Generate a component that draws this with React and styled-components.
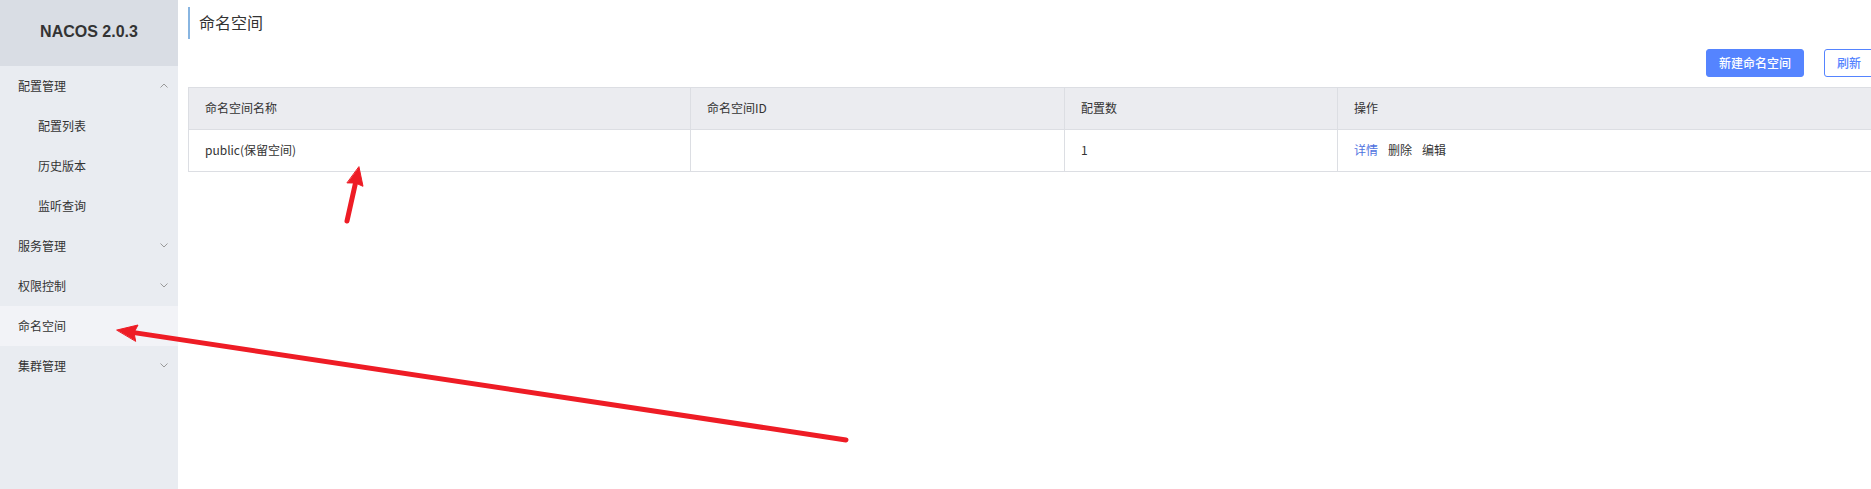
import React from 'react';
import styled, { createGlobalStyle } from 'styled-components';

const GlobalStyle = createGlobalStyle`
  *, *::before, *::after { box-sizing: border-box; }
  html, body { margin: 0; padding: 0; background: #fff; overflow: hidden; }
  body {
    font-family: "Noto Sans CJK SC", "Liberation Sans", sans-serif;
    font-size: 12px;
    color: #333;
  }
`;

const Page = styled.div`
  position: relative;
  display: flex;
  width: 1871px;
  height: 489px;
`;

const Sidebar = styled.aside`
  flex: 0 0 178px;
  width: 178px;
  height: 100%;
  background: #e9ecf1;
  display: flex;
  flex-direction: column;
`;

const Brand = styled.div`
  height: 66px;
  background: #d9dde4;
  display: flex;
  align-items: center;
  justify-content: center;
  padding-bottom: 3px;
  font-family: "Liberation Sans", Arial, sans-serif;
  font-weight: bold;
  font-size: 16px;
  color: #333;
`;

const MenuItem = styled.div`
  height: 40px;
  display: flex;
  align-items: center;
  justify-content: space-between;
  padding: 0 10px 2px ${p => (p.$sub ? 38 : 18)}px;
  background: ${p => (p.$active ? '#f2f3f7' : 'transparent')};
  color: #333;
  font-size: 12px;
`;

const Chevron = styled.svg`
  width: 8px;
  height: 5px;
  flex: 0 0 auto;
`;

const Main = styled.main`
  flex: 0 0 auto;
  width: 1696px;
  padding: 7px 0 0 10px;
  display: flex;
  flex-direction: column;
`;

const Title = styled.h1`
  margin: 0;
  height: 32px;
  border-left: 2px solid #88b5e1;
  padding-left: 9px;
  font-size: 16px;
  font-weight: normal;
  line-height: 30px;
  color: #333;
`;

const Toolbar = styled.div`
  margin-top: 10px;
  display: flex;
  justify-content: flex-end;
  gap: 20px;
`;

const Button = styled.button`
  height: 28px;
  padding: 0 12px;
  border-radius: 3px;
  border: 1px solid #5584ff;
  background: ${p => (p.$primary ? '#5584ff' : '#fff')};
  color: ${p => (p.$primary ? '#fff' : '#5584ff')};
  font-family: "Noto Sans CJK SC", sans-serif;
  font-size: 12px;
  font-weight: 500;
  line-height: 24px;
  cursor: pointer;
`;

const Table = styled.table`
  margin-top: 10px;
  width: 100%;
  border-collapse: collapse;
  table-layout: fixed;
  border: 1px solid #dcdee3;
`;

const HeadCell = styled.th`
  height: 42px;
  padding: 0 16px 2px;
  background: #ebecf0;
  border: 1px solid #dcdee3;
  text-align: left;
  font-weight: normal;
  font-size: 12px;
  color: #333;
`;

const Cell = styled.td`
  height: 42px;
  padding: 0 16px 2px;
  border: 1px solid #dcdee3;
  font-size: 12px;
  color: #333;
`;

const Action = styled.a`
  margin-right: 10px;
  color: ${p => (p.$link ? '#4f72e0' : '#333')};
  text-decoration: none;
  cursor: pointer;
`;

const Overlay = styled.svg`
  position: absolute;
  left: 0;
  top: 0;
  width: 1871px;
  height: 489px;
  pointer-events: none;
`;

const Down = () => (
  <Chevron viewBox="0 0 8 5">
    <polyline points="0.5,0.5 4,4 7.5,0.5" fill="none" stroke="#999" strokeWidth="1" />
  </Chevron>
);
const Up = () => (
  <Chevron viewBox="0 0 8 5">
    <polyline points="0.5,4.5 4,1 7.5,4.5" fill="none" stroke="#999" strokeWidth="1" />
  </Chevron>
);

const menu = [
  { label: '配置管理', icon: 'up' },
  { label: '配置列表', sub: true },
  { label: '历史版本', sub: true },
  { label: '监听查询', sub: true },
  { label: '服务管理', icon: 'down' },
  { label: '权限控制', icon: 'down' },
  { label: '命名空间', active: true },
  { label: '集群管理', icon: 'down' },
];

export default function App() {
  return (
    <>
      <GlobalStyle />
      <Page>
        <Sidebar>
          <Brand>NACOS 2.0.3</Brand>
          {menu.map(m => (
            <MenuItem key={m.label} $sub={m.sub} $active={m.active}>
              <span>{m.label}</span>
              {m.icon === 'up' && <Up />}
              {m.icon === 'down' && <Down />}
            </MenuItem>
          ))}
        </Sidebar>
        <Main>
          <Title>命名空间</Title>
          <Toolbar>
            <Button $primary>新建命名空间</Button>
            <Button>刷新</Button>
          </Toolbar>
          <Table>
            <colgroup>
              <col style={{ width: 502 }} />
              <col style={{ width: 374 }} />
              <col style={{ width: 273 }} />
              <col />
            </colgroup>
            <thead>
              <tr>
                <HeadCell>命名空间名称</HeadCell>
                <HeadCell>命名空间ID</HeadCell>
                <HeadCell>配置数</HeadCell>
                <HeadCell>操作</HeadCell>
              </tr>
            </thead>
            <tbody>
              <tr>
                <Cell>public(保留空间)</Cell>
                <Cell></Cell>
                <Cell>1</Cell>
                <Cell>
                  <Action $link>详情</Action>
                  <Action>删除</Action>
                  <Action>编辑</Action>
                </Cell>
              </tr>
            </tbody>
          </Table>
        </Main>
        <Overlay viewBox="0 0 1871 489">
          <g stroke="#ee1c25" strokeWidth="5" strokeLinecap="round" fill="#ee1c25">
            <line x1="846" y1="440" x2="134" y2="332.6" />
            <polygon points="117,330 138,325 134,332.6 135.6,341" strokeWidth="1" strokeLinejoin="round" />
            <line x1="347" y1="221" x2="355.5" y2="183" />
            <polygon points="359,167 363,186.3 355.5,183 347.3,182.9" strokeWidth="1" strokeLinejoin="round" />
          </g>
        </Overlay>
      </Page>
    </>
  );
}
